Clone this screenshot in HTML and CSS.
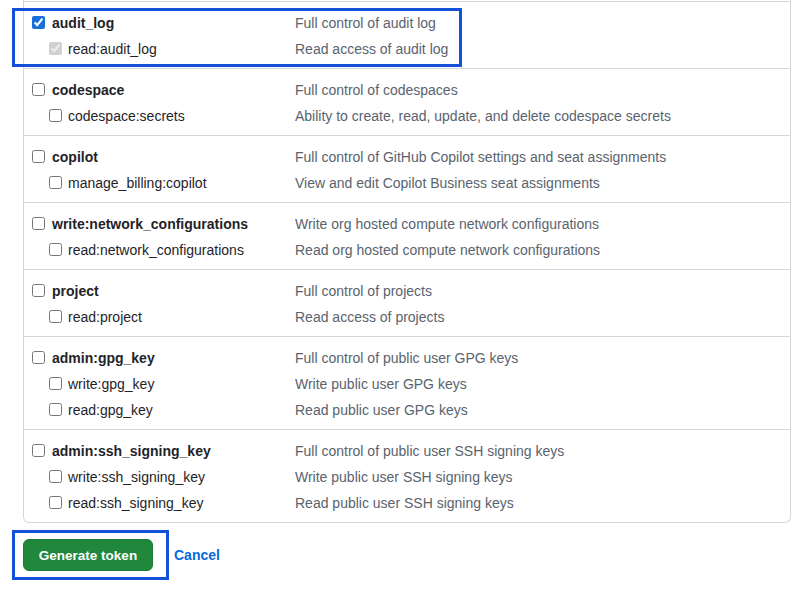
FILE: index.html
```html
<!DOCTYPE html>
<html>
  <head>
    <meta charset="UTF-8" />
    <meta name="viewport" content="width=device-width, initial-scale=1.0" />
    <title>New personal access token - scopes</title>
    <link rel="stylesheet" href="styles.css">
  </head>
  <body>
    <div class="scopes">
      <div class="group">
        <label class="row main"><input type="checkbox" checked><span class="name">audit_log</span><span class="desc">Full control of audit log</span></label>
        <label class="row sub"><input type="checkbox" checked disabled><span class="name">read:audit_log</span><span class="desc">Read access of audit log</span></label>
      </div>
      <div class="group">
        <label class="row main"><input type="checkbox"><span class="name">codespace</span><span class="desc">Full control of codespaces</span></label>
        <label class="row sub"><input type="checkbox"><span class="name">codespace:secrets</span><span class="desc">Ability to create, read, update, and delete codespace secrets</span></label>
      </div>
      <div class="group">
        <label class="row main"><input type="checkbox"><span class="name">copilot</span><span class="desc">Full control of GitHub Copilot settings and seat assignments</span></label>
        <label class="row sub"><input type="checkbox"><span class="name">manage_billing:copilot</span><span class="desc">View and edit Copilot Business seat assignments</span></label>
      </div>
      <div class="group">
        <label class="row main"><input type="checkbox"><span class="name">write:network_configurations</span><span class="desc">Write org hosted compute network configurations</span></label>
        <label class="row sub"><input type="checkbox"><span class="name">read:network_configurations</span><span class="desc">Read org hosted compute network configurations</span></label>
      </div>
      <div class="group">
        <label class="row main"><input type="checkbox"><span class="name">project</span><span class="desc">Full control of projects</span></label>
        <label class="row sub"><input type="checkbox"><span class="name">read:project</span><span class="desc">Read access of projects</span></label>
      </div>
      <div class="group">
        <label class="row main"><input type="checkbox"><span class="name">admin:gpg_key</span><span class="desc">Full control of public user GPG keys</span></label>
        <label class="row sub"><input type="checkbox"><span class="name">write:gpg_key</span><span class="desc">Write public user GPG keys</span></label>
        <label class="row sub"><input type="checkbox"><span class="name">read:gpg_key</span><span class="desc">Read public user GPG keys</span></label>
      </div>
      <div class="group">
        <label class="row main"><input type="checkbox"><span class="name">admin:ssh_signing_key</span><span class="desc">Full control of public user SSH signing keys</span></label>
        <label class="row sub"><input type="checkbox"><span class="name">write:ssh_signing_key</span><span class="desc">Write public user SSH signing keys</span></label>
        <label class="row sub"><input type="checkbox"><span class="name">read:ssh_signing_key</span><span class="desc">Read public user SSH signing keys</span></label>
      </div>
    </div>

    <div class="actions">
      <button class="btn-primary" type="button">Generate token</button>
      <a class="cancel" href="#">Cancel</a>
    </div>

    <!-- annotation frames drawn over the screenshot -->
    <div class="mark mark-scope"></div>
    <div class="mark mark-button"></div>
  </body>
</html>
```

FILE: styles.css
```css
html,
body {
  margin: 0;
  background: #fff;
}

body {
  position: relative;
  font-family: "Liberation Sans", Arial, sans-serif;
  font-size: 14px;
  color: #1f2328;
  height: 590px;
  overflow: hidden;
}

.scopes {
  margin: 0 0 0 23px;
  width: 766px;
  border: 1px solid #d1d9e0;
  border-top: 0;
  border-radius: 0 0 6px 6px;
  padding-top: 1px;
}

.group {
  border-top: 1px solid #d1d9e0;
  padding: 8px 0 7px;
  display: flex;
  flex-direction: column;
  gap: 1px;
}

.row {
  display: grid;
  align-items: center;
  height: 25px;
}

.row input {
  margin: 0;
  width: 13px;
  height: 13px;
  accent-color: #1a6fd6;
}

/* name column ends at 271px so all descriptions line up */
.row.main {
  grid-template-columns: 13px 236px 1fr;
  column-gap: 7px;
  padding-left: 8px;
}

.row.sub {
  grid-template-columns: 13px 221px 1fr;
  column-gap: 6px;
  padding-left: 25px;
}

.main .name {
  font-weight: bold;
}

.desc {
  color: #59636e;
}

.actions {
  display: flex;
  align-items: center;
  gap: 21px;
  margin: 16px 0 0 23px;
}

.btn-primary {
  width: 130px;
  height: 32px;
  border: 1px solid #1b7a37;
  border-radius: 6px;
  background: #1f883d;
  color: #fff;
  font-family: inherit;
  font-size: 13.5px;
  font-weight: bold;
}

.cancel {
  color: #0969da;
  text-decoration: none;
  font-weight: bold;
}

/* blue frames laid over the content */
.mark {
  position: absolute;
  border: 3px solid #1351d8;
  box-sizing: border-box;
}

.mark-scope {
  left: 12px;
  top: 8px;
  width: 450px;
  height: 59px;
}

.mark-button {
  left: 12px;
  top: 530px;
  width: 157px;
  height: 50px;
}
```
